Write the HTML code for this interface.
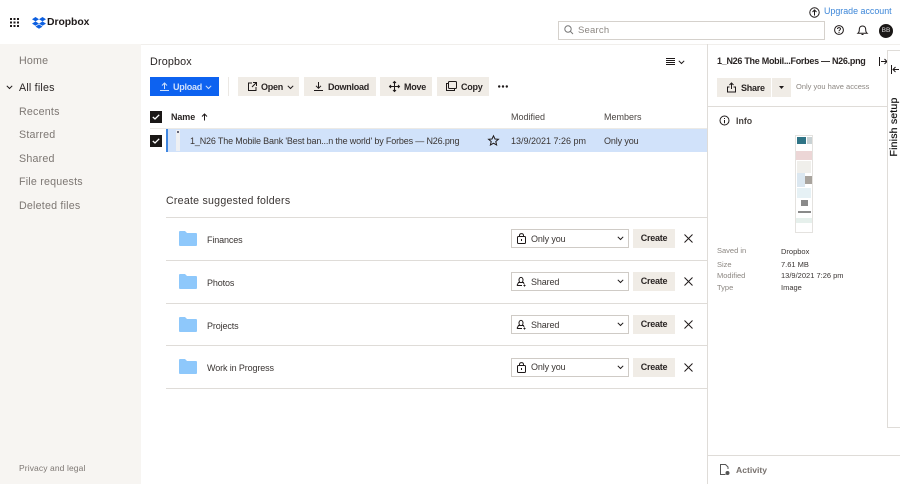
<!DOCTYPE html>
<html><head><meta charset="utf-8">
<style>
html,body{margin:0;padding:0;background:#fff}
#p{position:relative;width:900px;height:484px;overflow:hidden;background:#fff;font-family:"Liberation Sans",sans-serif;color:#1e1919}
.t{position:absolute;white-space:nowrap;line-height:14px}
.b{position:absolute;background:#f0ece6;font-weight:bold;font-size:9px;letter-spacing:-.25px;color:#2a2524;height:19px;line-height:20px}
.c{line-height:19px;text-align:center}
.l{position:absolute;background:#dfdcd8;height:1px}
svg{position:absolute;overflow:visible}
.s{fill:none;stroke:#1e1919;stroke-width:1}
.nav{font-size:10.7px;color:#7d7773;letter-spacing:.2px}
.r{font-size:9px;letter-spacing:-.12px;color:#3a3533}
</style></head><body><div id="p">
<!-- sidebar -->
<div style="position:absolute;left:0;top:44px;width:141px;height:440px;background:#f7f5f2"></div>
<svg style="left:10px;top:18px" width="9" height="9"><g fill="#1e1919"><rect x="0" y="0" width="2" height="2"/><rect x="3.5" y="0" width="2" height="2"/><rect x="7" y="0" width="2" height="2"/><rect x="0" y="3.5" width="2" height="2"/><rect x="3.5" y="3.5" width="2" height="2"/><rect x="7" y="3.5" width="2" height="2"/><rect x="0" y="7" width="2" height="2"/><rect x="3.5" y="7" width="2" height="2"/><rect x="7" y="7" width="2" height="2"/></g></svg>
<svg style="left:32px;top:17px" width="14" height="12" viewBox="0 0 14 12"><path fill="#0d5fe0" d="M3.5 0 7 2.2 3.5 4.4 0 2.2zM10.5 0 14 2.2 10.5 4.4 7 2.2zM0 6.6 3.5 4.4 7 6.6 3.5 8.8zM10.5 4.4 14 6.6 10.5 8.8 7 6.6zM3.5 9.6 7 7.4 10.5 9.6 7 11.8z"/></svg>
<div class="t" style="left:47px;top:16px;font-size:10.4px;font-weight:bold;letter-spacing:-.05px">Dropbox</div>
<div class="t nav" style="left:19px;top:54px">Home</div>
<svg style="left:6px;top:85px" width="7" height="5"><path class="s" d="M.8.8 3.5 3.5 6.2.8"/></svg>
<div class="t nav" style="left:19px;top:81px;color:#2a2524">All files</div>
<div class="t nav" style="left:19px;top:105px">Recents</div>
<div class="t nav" style="left:19px;top:128px">Starred</div>
<div class="t nav" style="left:19px;top:152px">Shared</div>
<div class="t nav" style="left:19px;top:175px">File requests</div>
<div class="t nav" style="left:19px;top:199px">Deleted files</div>
<div class="t" style="left:19px;top:461px;font-size:8.5px;color:#7d7773;letter-spacing:.1px">Privacy and legal</div>
<!-- top right -->
<svg style="left:809px;top:7px" width="11" height="11"><circle class="s" cx="5.5" cy="5.5" r="4.7"/><path class="s" d="M5.5 8.5V3M3.5 5 5.5 3 7.500 5"/></svg>
<div class="t" style="left:824px;top:4px;font-size:8.9px;color:#3c86d8">Upgrade account</div>
<div style="position:absolute;left:558px;top:21px;width:265px;height:17px;border:1px solid #d5d1cc"></div>
<svg style="left:564px;top:25px" width="10" height="10"><circle cx="4" cy="4" r="3.2" fill="none" stroke="#777" stroke-width="1"/><path d="M6.4 6.4 9 9" stroke="#777" stroke-width="1"/></svg>
<div class="t" style="left:578px;top:24px;font-size:9.500px;color:#8c8782;letter-spacing:.2px">Search</div>
<svg style="left:834px;top:25px" width="10" height="10"><circle class="s" cx="5" cy="5" r="4.400"/><path class="s" d="M3.500 4C3.500 2 6.700 2.300 6.500 4 6.400 5 5 5 5 6.200M5 7V8"/></svg>
<svg style="left:857px;top:25px" width="11" height="11"><path class="s" d="M1 8.200C2.300 7.200 2.300 6 2.300 4.500 2.300 2.500 3.500 1 5.500 1S8.700 2.500 8.700 4.500C8.700 6 8.700 7.200 10 8.200ZM4.500 9.500H6.500"/></svg>
<div style="position:absolute;left:879px;top:24px;width:14px;height:14px;border-radius:50%;background:#1a1716;color:#ddd;font-size:6.500px;text-align:center;line-height:14px">BB</div>
<div class="l" style="left:141px;top:44px;width:759px;background:#f1efec"></div>
<!-- main head -->
<div class="t" style="left:150px;top:55px;font-size:10.800px;letter-spacing:.15px;color:#2a2524">Dropbox</div>
<svg style="left:666px;top:58px" width="9" height="8"><path class="s" d="M0 .5H9M0 2.500H9M0 4.500H9M0 6.500H9"/></svg>
<svg style="left:678px;top:60px" width="7" height="5"><path class="s" d="M.8.8 3.500 3.500 6.200.8"/></svg>
<!-- toolbar -->
<div class="b" style="left:150px;top:77px;width:69px;background:#0d62f0;color:#cfe0fb"><span style="position:absolute;left:23px">Upload</span></div>
<svg style="left:160px;top:82px" width="9" height="9"><path fill="none" stroke="#cfe0fb" d="M4.500 7V1M2 3.500 4.500 1 7 3.500M0 8.500H9"/></svg>
<svg style="left:205px;top:85px" width="7" height="5"><path fill="none" stroke="#cfe0fb" d="M.8.8 3.500 3.500 6.200.8"/></svg>
<div class="l" style="left:228px;top:77px;width:1px;height:19px;background:#ebe8e4"></div>
<div class="b" style="left:238px;top:77px;width:61px"><span style="position:absolute;left:23px">Open</span></div>
<svg style="left:248px;top:82px" width="9" height="9"><path class="s" d="M4 1H.5V8.500H8V5M5 .5H8.500V4M8.500 .5 4 5"/></svg>
<svg style="left:287px;top:85px" width="7" height="5"><path class="s" d="M.8.8 3.500 3.500 6.200.8"/></svg>
<div class="b" style="left:304px;top:77px;width:72px"><span style="position:absolute;left:24px">Download</span></div>
<svg style="left:314px;top:82px" width="9" height="10"><path class="s" d="M4.500 0V6M2 3.800 4.500 6.300 7 3.800M0 8.500H9"/></svg>
<div class="b" style="left:380px;top:77px;width:52px"><span style="position:absolute;left:24px">Move</span></div>
<svg style="left:389px;top:81px" width="11" height="11"><path class="s" d="M5.500 .5V10.500M.5 5.500H10.500M4 2 5.500 .5 7 2M4 9 5.500 10.500 7 9M2 4 .5 5.500 2 7M9 4 10.500 5.500 9 7"/></svg>
<div class="b" style="left:437px;top:77px;width:52px"><span style="position:absolute;left:24px">Copy</span></div>
<svg style="left:446px;top:81px" width="11" height="10"><rect class="s" x="2.500" y=".5" width="8" height="7" rx="1"/><path class="s" d="M2.500 2.500H.5V9.500H8.500V7.500"/></svg>
<svg style="left:498px;top:85px" width="10" height="3"><g fill="#1e1919"><circle cx="1.200" cy="1.500" r="1.200"/><circle cx="5" cy="1.500" r="1.200"/><circle cx="8.800" cy="1.500" r="1.200"/></g></svg>
<!-- table head -->
<div style="position:absolute;left:150px;top:111px;width:12px;height:12px;background:#1a1716"></div>
<svg style="left:152px;top:114px" width="8" height="6"><path fill="none" stroke="#fff" stroke-width="1.300" d="M.8 3 3 5 7.200.8"/></svg>
<div class="t" style="left:171px;top:110px;font-size:9px;font-weight:bold;letter-spacing:-.1px;color:#2a2524">Name</div>
<svg style="left:201px;top:113px" width="7" height="8"><path class="s" d="M3.500 7.500V1M1 3.500 3.500 1 6 3.500"/></svg>
<div class="t" style="left:511px;top:110px;font-size:9px;color:#4a4542">Modified</div>
<div class="t" style="left:604px;top:110px;font-size:9px;color:#4a4542">Members</div>
<div class="l" style="left:150px;top:128px;width:557px;background:#eceae6"></div>
<!-- row -->
<div style="position:absolute;left:166px;top:129px;width:541px;height:23px;background:#d1e2fa"></div>
<div style="position:absolute;left:166px;top:129px;width:2px;height:23px;background:#3f86e0"></div>
<div style="position:absolute;left:176px;top:130px;width:4px;height:21px;background:#eef0f3"></div>
<div style="position:absolute;left:177px;top:131px;width:2px;height:2px;background:#667"></div>
<div style="position:absolute;left:150px;top:135px;width:12px;height:12px;background:#1a1716"></div>
<svg style="left:152px;top:138px" width="8" height="6"><path fill="none" stroke="#fff" stroke-width="1.300" d="M.8 3 3 5 7.200.8"/></svg>
<div class="t" style="left:190px;top:134px;font-size:9px;color:#3a3533;letter-spacing:-.16px">1_N26 The Mobile Bank 'Best ban...n the world' by Forbes — N26.png</div>
<svg style="left:488px;top:135px" width="11" height="11"><path class="s" d="M5.500 .8 7 4 10.400 4.300 7.800 6.500 8.600 10 5.500 8.200 2.400 10 3.200 6.500 .6 4.300 4 4Z"/></svg>
<div class="t" style="left:511px;top:134px;font-size:9px;color:#3a3533">13/9/2021 7:26 pm</div>
<div class="t r" style="left:604px;top:134px">Only you</div>
<!-- suggested -->
<div class="t" style="left:166px;top:194px;font-size:10.600px;letter-spacing:.25px;color:#3a3533">Create suggested folders</div>
<div class="l" style="left:166px;top:217px;width:541px"></div>
<div class="l" style="left:166px;top:260px;width:541px"></div>
<div class="l" style="left:166px;top:303px;width:541px"></div>
<div class="l" style="left:166px;top:345px;width:541px"></div>
<div class="l" style="left:166px;top:388px;width:541px"></div>

<svg style="left:179px;top:231px" width="18" height="15"><path fill="#8ec8fb" d="M0 1Q0 0 1 0H6L8 2H17Q18 2 18 3V14Q18 15 17 15H1Q0 15 0 14Z"/></svg>
<div class="t r" style="left:207px;top:233px">Finances</div>
<div style="position:absolute;left:511px;top:229px;width:116px;height:17px;border:1px solid #cfcbc6"></div>
<svg style="left:517px;top:233px" width="9" height="11"><rect class="s" x=".5" y="3.500" width="8" height="7" rx="1"/><path class="s" d="M2.500 3.500V2.500C2.500 0 6.500 0 6.500 2.500V3.500M4.500 6V8"/></svg>
<div class="t r" style="left:531px;top:232px">Only you</div>
<svg style="left:617px;top:236px" width="7" height="5"><path class="s" d="M.8.8 3.500 3.500 6.200.8"/></svg>
<div class="b c" style="left:633px;top:229px;width:42px">Create</div>
<svg style="left:684px;top:234px" width="9" height="9"><path class="s" d="M.5 .5 8.500 8.500M8.500 .5 .5 8.500"/></svg>

<svg style="left:179px;top:274px" width="18" height="15"><path fill="#8ec8fb" d="M0 1Q0 0 1 0H6L8 2H17Q18 2 18 3V14Q18 15 17 15H1Q0 15 0 14Z"/></svg>
<div class="t r" style="left:207px;top:276px">Photos</div>
<div style="position:absolute;left:511px;top:272px;width:116px;height:17px;border:1px solid #cfcbc6"></div>
<svg style="left:516px;top:276px" width="11" height="11"><path class="s" d="M1 9.500 2.500 6.500H7.500L8 8M3 4C3 .5 7 .5 7 4S3 7.500 3 4ZM1 9.500H6M8.500 8.500V10.500M7.500 9.500H9.500"/></svg>
<div class="t r" style="left:531px;top:275px">Shared</div>
<svg style="left:617px;top:279px" width="7" height="5"><path class="s" d="M.8.8 3.500 3.500 6.200.8"/></svg>
<div class="b c" style="left:633px;top:272px;width:42px">Create</div>
<svg style="left:684px;top:277px" width="9" height="9"><path class="s" d="M.5 .5 8.500 8.500M8.500 .5 .5 8.500"/></svg>

<svg style="left:179px;top:317px" width="18" height="15"><path fill="#8ec8fb" d="M0 1Q0 0 1 0H6L8 2H17Q18 2 18 3V14Q18 15 17 15H1Q0 15 0 14Z"/></svg>
<div class="t r" style="left:207px;top:319px">Projects</div>
<div style="position:absolute;left:511px;top:315px;width:116px;height:17px;border:1px solid #cfcbc6"></div>
<svg style="left:516px;top:319px" width="11" height="11"><path class="s" d="M1 9.500 2.500 6.500H7.500L8 8M3 4C3 .5 7 .5 7 4S3 7.500 3 4ZM1 9.500H6M8.500 8.500V10.500M7.500 9.500H9.500"/></svg>
<div class="t r" style="left:531px;top:318px">Shared</div>
<svg style="left:617px;top:322px" width="7" height="5"><path class="s" d="M.8.8 3.500 3.500 6.200.8"/></svg>
<div class="b c" style="left:633px;top:315px;width:42px">Create</div>
<svg style="left:684px;top:320px" width="9" height="9"><path class="s" d="M.5 .5 8.500 8.500M8.500 .5 .5 8.500"/></svg>

<svg style="left:179px;top:359px" width="18" height="15"><path fill="#8ec8fb" d="M0 1Q0 0 1 0H6L8 2H17Q18 2 18 3V14Q18 15 17 15H1Q0 15 0 14Z"/></svg>
<div class="t r" style="left:207px;top:361px">Work in Progress</div>
<div style="position:absolute;left:511px;top:358px;width:116px;height:17px;border:1px solid #cfcbc6"></div>
<svg style="left:517px;top:362px" width="9" height="11"><rect class="s" x=".5" y="3.500" width="8" height="7" rx="1"/><path class="s" d="M2.500 3.500V2.500C2.500 0 6.500 0 6.500 2.500V3.500M4.500 6V8"/></svg>
<div class="t r" style="left:531px;top:360px">Only you</div>
<svg style="left:617px;top:365px" width="7" height="5"><path class="s" d="M.8.8 3.500 3.500 6.200.8"/></svg>
<div class="b c" style="left:633px;top:358px;width:42px">Create</div>
<svg style="left:684px;top:363px" width="9" height="9"><path class="s" d="M.5 .5 8.500 8.500M8.500 .5 .5 8.500"/></svg>

<!-- right panel -->
<div style="position:absolute;left:707px;top:44px;width:1px;height:440px;background:#dfdcd8"></div>
<div class="t" style="left:717px;top:54px;font-size:9px;font-weight:bold;letter-spacing:-.28px;color:#2a2524">1_N26 The Mobil...Forbes — N26.png</div>
<svg style="left:879px;top:57px" width="9" height="9"><path class="s" d="M.5 0V9M2 4.500H8M5.500 2 8 4.500 5.500 7"/></svg>
<div class="b" style="left:717px;top:78px;width:54px"><span style="position:absolute;left:24px">Share</span></div>
<div class="b" style="left:772px;top:78px;width:19px"></div>
<svg style="left:727px;top:82px" width="9" height="11"><path class="s" d="M4.500 7V1M2.500 3 4.500 1 6.500 3M2.500 5H.5V10H8.500V5H6.500"/></svg>
<svg style="left:779px;top:86px" width="5" height="3"><path fill="#1e1919" d="M0 0H5L2.500 3Z"/></svg>
<div class="t" style="left:796px;top:80px;font-size:7.500px;color:#8c8782">Only you have access</div>
<div class="l" style="left:708px;top:106px;width:180px"></div>
<svg style="left:719px;top:115px" width="11" height="11"><circle class="s" cx="5.500" cy="5.500" r="4.500"/><path class="s" d="M5.500 5V8.200M5.500 3V4"/></svg>
<div class="t" style="left:736px;top:114px;font-size:8.800px;font-weight:bold;color:#4a4542">Info</div>
<!-- thumb -->
<div style="position:absolute;left:795px;top:135px;width:18px;height:98px;background:#fff;border:1px solid #e4e2df;box-sizing:border-box">
<div style="position:absolute;left:1px;top:1px;width:9px;height:7px;background:#2f7486"></div>
<div style="position:absolute;left:11px;top:1px;width:5px;height:7px;background:#c9d2d4"></div>
<div style="position:absolute;left:0;top:15px;width:16px;height:9px;background:#ecd6d6"></div>
<div style="position:absolute;left:1px;top:25px;width:14px;height:12px;background:#f0efeb"></div>
<div style="position:absolute;left:1px;top:37px;width:8px;height:14px;background:#dbe7f0"></div>
<div style="position:absolute;left:9px;top:40px;width:7px;height:8px;background:#a8a39d"></div>
<div style="position:absolute;left:1px;top:52px;width:14px;height:10px;background:#e6f1f5"></div>
<div style="position:absolute;left:5px;top:64px;width:7px;height:6px;background:#8a8a8a"></div>
<div style="position:absolute;left:2px;top:75px;width:13px;height:2px;background:#8a8a8a"></div>
<div style="position:absolute;left:0;top:82px;width:16px;height:5px;background:#e6f0ec"></div>
</div>
<div class="t" style="left:717px;top:244px;font-size:7.500px;color:#8c8782">Saved in</div>
<div class="t" style="left:717px;top:258px;font-size:7.500px;color:#8c8782">Size</div>
<div class="t" style="left:717px;top:269px;font-size:7.500px;color:#8c8782">Modified</div>
<div class="t" style="left:717px;top:281px;font-size:7.500px;color:#8c8782">Type</div>
<div class="t" style="left:781px;top:245px;font-size:7.500px;color:#3a3533">Dropbox</div>
<div class="t" style="left:781px;top:258px;font-size:7.500px;color:#3a3533">7.61 MB</div>
<div class="t" style="left:781px;top:269px;font-size:7.500px;color:#3a3533">13/9/2021 7:26 pm</div>
<div class="t" style="left:781px;top:281px;font-size:7.500px;color:#3a3533">Image</div>
<div class="l" style="left:708px;top:455px;width:192px"></div>
<svg style="left:720px;top:464px" width="10" height="12"><path fill="none" stroke="#555" d="M5.500 10.500H.5V.5H5.500L8 3V5"/><circle cx="7.500" cy="9" r="2" fill="#555"/></svg>
<div class="t" style="left:736px;top:463px;font-size:8.600px;font-weight:bold;color:#77716d">Activity</div>
<!-- finish setup -->
<div style="position:absolute;left:887px;top:50px;width:20px;height:378px;background:#fff;border:1px solid #dfdcd8;box-sizing:border-box"></div>
<svg style="left:891px;top:65px" width="8" height="9"><path class="s" d="M.5 0V9M8 4.500H2M4.500 2 2 4.500 4.500 7"/></svg>
<div class="t" style="left:894px;top:127px;font-size:10.500px;color:#111;transform:translate(-50%,-50%) rotate(-90deg);letter-spacing:.2px;-webkit-text-stroke:.2px #111">Finish setup</div>
</div></body></html>
